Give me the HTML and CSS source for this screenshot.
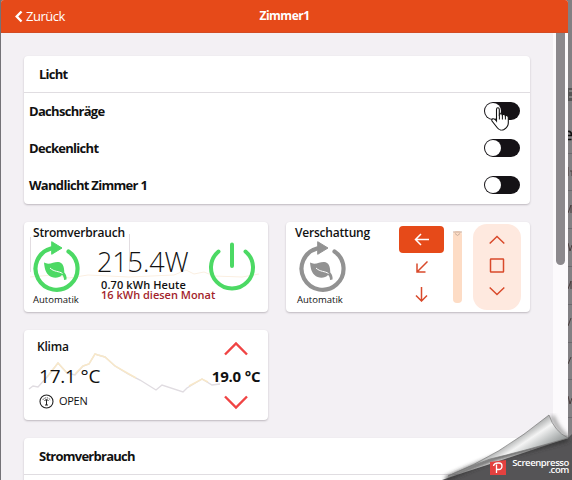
FILE: index.html
```html
<!DOCTYPE html>
<html lang="de">
<head>
<meta charset="utf-8">
<title>Zimmer1</title>
<link rel="stylesheet" href="styles.css">
</head>
<body>
<svg class="defs" width="0" height="0">
  <symbol id="auto" viewBox="0 0 50 54">
    <path d="M37.500 12.500A21 21 0 1 1 20 9.500" fill="none" stroke="currentColor" stroke-width="4.200" stroke-linecap="round"/>
    <path d="M20.700 2.700L31 9L20.700 15.300Z" fill="currentColor" stroke="currentColor" stroke-width="1"/>
    <path d="M13 23.500C18 26.500 23 22.500 27.300 23C31.500 23.500 33.300 27 33.300 33.500C35 35.500 36 38 35.500 40.500L33 41C33 38.500 32.300 37 31 36C28 39.500 21 39.500 17.500 36C14 32.500 13.500 28 13 23.500Z" fill="currentColor"/>
    <path d="M19 29C23 33 28 32 31.500 34.500" fill="none" stroke="#fff" stroke-width="1"/>
  </symbol>
</svg>
<div class="window">
  <header class="topbar">
    <div class="back"><svg width="8" height="13" viewBox="0 0 8 13"><path d="M6.500 1.500L1.700 6.500L6.500 11.500" fill="none" stroke="#fff" stroke-width="2.400"/></svg><span>Zurück</span></div>
    <h1>Zimmer1</h1>
  </header>
  <div class="viewport">
    <main>
      <section class="card list">
        <h2>Licht</h2>
        <div class="row"><span>Dachschräge</span><i class="toggle"><b></b><svg class="cursor" width="20" height="26" viewBox="0 0 20 26"><path d="M5.500 15V3.500C5.500 1.200 8.300 1.200 8.300 3.500V8.500C9 7.500 11 7.500 11.300 9C12.200 8 14 8.300 14.300 9.800C15.500 9 17.300 9.800 17.300 11.500V17C17.300 20 15.500 22 13 23.500C11 24.500 8 24 6.500 22L1 15C0 12.500 3 11.500 5.500 15Z" fill="#fff" stroke="#111" stroke-width="1.100"/><path d="M8.400 8.500v5M11.400 9v4.500M14.400 10v3.500" stroke="#111"/></svg></i></div>
        <div class="row"><span>Deckenlicht</span><i class="toggle"><b></b></i></div>
        <div class="row"><span>Wandlicht Zimmer 1</span><i class="toggle"><b></b></i></div>
      </section>
      <div class="grid">
        <section class="card tile power">
          <svg class="plot" width="244" height="91" viewBox="0 0 244 91"><path d="M6.500 15V50M105.500 12V50" stroke="#e2dde1"/><path d="M6 55L28 53L45 56L64 53L105 55L150 53L162 48L170 52L180 50L190 54L218 55L235 52" fill="none" stroke="#fbefe1"/></svg>
          <div class="auto green"><h3>Stromverbrauch</h3><svg width="50" height="54"><use href="#auto"/></svg><small>Automatik</small></div>
          <div class="usage"><strong>215.4W</strong><span>0.70 kWh Heute</span><em>16 kWh diesen Monat</em></div>
          <svg class="switch" width="48" height="50" viewBox="0 0 48 50"><path d="M10.500 10.500A21 21 0 1 0 37.500 10.500M24 3.500V25" fill="none" stroke="#4cd964" stroke-width="4" stroke-linecap="round"/></svg>
        </section>
        <section class="card tile shade">
          <div class="auto gray"><h3>Verschattung</h3><svg width="50" height="54"><use href="#auto"/></svg><small>Automatik</small></div>
          <div class="directions">
            <span class="active"><svg width="16" height="13" viewBox="0 0 16 13"><path d="M15 6.500H1.500M7 1L1.500 6.500L7 12"/></svg></span>
            <svg width="12" height="12" viewBox="0 0 12 12"><path d="M11.500 .5L1 11M1 2.500V11H9.500"/></svg>
            <svg width="13" height="15" viewBox="0 0 13 15"><path d="M6.500 0V14M1 8.500L6.500 14L12 8.500"/></svg>
          </div>
          <div class="slider"><svg width="9" height="7" viewBox="0 0 9 7"><path d="M0 1H9M2 2.500L4.500 4.500L7 2.500" fill="none" stroke="#c9ad9c"/></svg></div>
          <div class="shutter">
            <svg width="16" height="10" viewBox="0 0 16 10"><path d="M.7 8.500L8 1.500L15.300 8.500"/></svg>
            <svg width="16" height="15" viewBox="0 0 16 15"><rect x="1.500" y="1" width="13" height="13" rx=".5"/></svg>
            <svg width="16" height="10" viewBox="0 0 16 10"><path d="M.7 1.500L8 8.500L15.300 1.500"/></svg>
          </div>
        </section>
        <section class="card tile climate">
          <svg class="plot" width="244" height="91" viewBox="0 0 244 91"><path d="M5 59L9 56L14 57L23 47L34 33L43 43L51 45L59 36L65 34L71 24L74 25L81 27L91 36L104 44L116 50L132 60L138 55L159 62L163 58L178 49L188 55L196 54" fill="none" stroke="#e0dce1" stroke-width="1.400"/><path d="M23 47L34 33L43 43M51 44L59 36L65 34L71 24L74 25L81 27L91 36L112 48M165 56L178 49L184 52" fill="none" stroke="#f8e8c9" stroke-width="1.500"/></svg>
          <div class="reading"><h3>Klima</h3><strong>17.1 °C</strong><p><svg width="15" height="15" viewBox="0 0 15 15"><circle cx="7.500" cy="7.500" r="6.500" fill="none" stroke="#222" stroke-width="1.100"/><path d="M7.500 11V6M5.500 7L7.500 5L9.500 7M6 11h3" fill="none" stroke="#222"/><path d="M3.500 6Q7.500 1.500 11.500 6" fill="none" stroke="#444" stroke-dasharray="1.500 1"/></svg><span>OPEN</span></p></div>
          <div class="setpoint"><svg width="24" height="15" viewBox="0 0 24 15"><path d="M1 13.500L12 2.500L23 13.500"/></svg><b>19.0 °C</b><svg width="24" height="15" viewBox="0 0 24 15"><path d="M1 1.500L12 12.500L23 1.500"/></svg></div>
        </section>
      </div>
      <section class="card list last"><h2>Stromverbrauch</h2></section>
    </main>
    <div class="scroll"><i></i></div>
  </div>
</div>
<aside class="behind"><svg width="4" height="480" viewBox="0 0 4 480"><rect y="88" width="4" height="13" fill="#555"/><path d="M1 91H4M1 97H4" stroke="#aaa"/><path d="M0 153.500H4M0 190.500H4M0 228.500H4M0 266.500H4M0 304.500H4M0 342.500H4M0 379.500H4M0 417.500H4" stroke="#6b696d"/><path d="M0 131.500Q3.500 131 3.500 135.500H0M0 139.500H3.500" fill="none" stroke="#111" stroke-width="1.700"/><path d="M0 167V176M2 171H4V176M0 213L3 205V213M0 243L2 251L4 245M0 289L3 281V289M0 326L3 318M0 364L3 357M0 396L2 404L4 398" fill="none" stroke="#4a3d3d"/></svg></aside>
<div class="curl">
  <svg width="212" height="70" viewBox="0 0 212 70">
    <defs><linearGradient id="fold" gradientUnits="userSpaceOnUse" x1="158" y1="25" x2="176" y2="52"><stop offset="0" stop-color="#a8aaaa"/><stop offset=".3" stop-color="#f4f4f4"/><stop offset=".6" stop-color="#c3c6c6"/><stop offset="1" stop-color="#858989"/></linearGradient><filter id="soft"><feGaussianBlur stdDeviation="2"/></filter></defs>
    <path d="M192 6Q199 23 209 28" fill="none" stroke="#999" stroke-width="4" filter="url(#soft)"/>
    <path d="M82 70Q105 62 130 54L208 28L212 24V70Z" fill="#555456"/>
    <path d="M86 69Q112 57 136 48L208 29" fill="none" stroke="#333" stroke-width="4" filter="url(#soft)"/>
    <path d="M88 66Q139 46 189 5Q194 21 208 28Q160 42 130 49Q108 57 88 66Z" fill="url(#fold)" stroke="#777" stroke-width=".7"/>
    <path d="M130 52L146 50V65H130Z" fill="#e4413f"/>
    <path d="M136.500 63V54.500M133.500 56Q134 53 138 53H139Q142 53 142 56Q142 59.500 138.500 59.500H136.500" fill="none" stroke="#fff" stroke-width="1.300"/>
  </svg>
  <div class="brand"><span>Screenpresso</span><span>.com</span></div>
</div>
</body>
</html>
```
FILE: styles.css
```css
* { box-sizing: border-box; }
body { margin: 0; width: 572px; height: 480px; overflow: hidden; display: flex; position: relative; background: #747277; color: #111; font: 12px/16px "Open Sans", "Noto Sans", sans-serif; }
h1, h2, h3, p { margin: 0; }
svg { display: block; flex: none; }
.defs { position: absolute; }
.window { width: 567px; margin-left: 1px; height: 480px; background: #f3f0f4; overflow: hidden; border-radius: 3px 3px 0 0; flex: none; }
.topbar { height: 33px; background: #e64a19; color: #fff; display: grid; grid-template-columns: 1fr 1fr 1fr; align-items: center; border-bottom: 1px solid #d34b23; }
.back { display: flex; align-items: center; gap: 3px; padding-left: 14px; font-size: 13px; letter-spacing: -.5px; }
h1 { font-size: 12px; text-align: center; letter-spacing: -.5px; }
.viewport { display: flex; height: 447px; }
main { width: 552px; padding: 23px 23px 0 23px; flex: none; }
.card { background: #fff; border-radius: 4px; box-shadow: 0 1px 2px #bdb8be; }
.list { height: 148px; }
.list h2 { height: 37px; padding-left: 15px; font-size: 13px; line-height: 36px; font-weight: 700; letter-spacing: -.75px; border-bottom: 1px solid #e0dde1; }
.row { height: 37px; display: flex; align-items: center; justify-content: space-between; padding: 0 10px 2px 5px; font-size: 13px; font-weight: 700; letter-spacing: -.7px; }
.toggle { width: 36px; height: 18px; border-radius: 9px; padding: 1px; background: #151216; position: relative; }
.toggle b { display: block; width: 16px; height: 16px; border-radius: 50%; background: #fff; }
.cursor { position: absolute; left: 7px; top: 4px; }
.grid { display: grid; grid-template-columns: 244px 244px; gap: 18px; margin-top: 18px; }
.tile { height: 90px; position: relative; display: flex; overflow: hidden; }
.plot { position: absolute; left: 0; top: 0; }
.tile > div, .switch { position: relative; }
.tile h3 { font-size: 12px; line-height: 16px; font-weight: 600; white-space: nowrap; letter-spacing: -.2px; }
.auto { width: 65px; padding: 3px 0 0 7px; flex: none; }
.auto h3 { padding-left: 2px; }
.auto svg { margin-top: -2px; }
.auto small { display: block; font-size: 9.500px; line-height: 13px; margin: 0 0 0 2px; }
.green svg { color: #4cd964; }
.gray svg { color: #929292; }
.gray svg { margin-left: 4px; }
.gray small { margin-left: 4px; }
.usage { width: 121px; padding: 22px 0 0 8px; flex: none; white-space: nowrap; }
.usage strong { display: block; font-size: 27px; line-height: 36px; font-weight: 300; letter-spacing: -.1px; }
.usage span, .usage em { display: block; font-size: 11px; line-height: 10px; font-style: normal; font-weight: 600; margin-left: 4px; }
.usage span { letter-spacing: .1px; }
.usage em { color: #a31f2c; }
.switch { margin: 19px 0 0 -2px; }
.directions { width: 45px; margin: 4px 0 0 48px; display: flex; flex-direction: column; align-items: center; flex: none; }
.directions path, .shutter path, .shutter rect { fill: none; stroke: #d94a2b; stroke-width: 1.500; }
.directions .active path { stroke: #fff; }
.active { width: 45px; height: 27px; border-radius: 4px; background: #e64a19; display: grid; place-items: center; }
.directions > svg:nth-child(2) { margin-top: 8px; }
.directions > svg:nth-child(3) { margin-top: 14px; }
.slider { margin: 9px 0 0 9px; width: 9px; height: 72px; border-radius: 4px; background: #fddcc5; flex: none; }
.shutter { width: 48px; height: 86px; margin: 2px 0 0 11px; background: #fee9df; border-radius: 14px; padding: 11px 0 14px; display: flex; flex-direction: column; align-items: center; justify-content: space-between; flex: none; }
.reading { width: 183px; padding: 9px 0 0 13px; }
.reading strong { display: block; margin: 9px 0 0 2px; font-size: 19px; line-height: 25px; font-weight: 400; letter-spacing: -.2px; }
.reading p { display: flex; align-items: center; gap: 5px; margin: 4px 0 0 2px; font-size: 11px; letter-spacing: -.3px; }
.setpoint { width: 58px; display: flex; flex-direction: column; align-items: center; padding: 11px 0 10px; justify-content: space-between; white-space: nowrap; }
.setpoint path { fill: none; stroke: #f04444; stroke-width: 2.400; }
.setpoint b { font-size: 15px; letter-spacing: -.2px; }
.last { margin-top: 18px; }
.scroll { width: 15px; background: #fcfafc; padding-left: 3px; }
.scroll i { display: block; width: 9px; height: 232px; border-radius: 0 0 5px 5px; background: #8c898d; }
.behind { width: 4px; overflow: hidden; background: #828083; }
.curl { position: absolute; right: 0; bottom: 0; width: 212px; height: 70px; }
.brand { position: absolute; right: 3px; top: 49px; display: flex; flex-direction: column; align-items: flex-end; color: #fff; font: 600 9.500px/7px "Open Sans", sans-serif; letter-spacing: -.4px; }
```
